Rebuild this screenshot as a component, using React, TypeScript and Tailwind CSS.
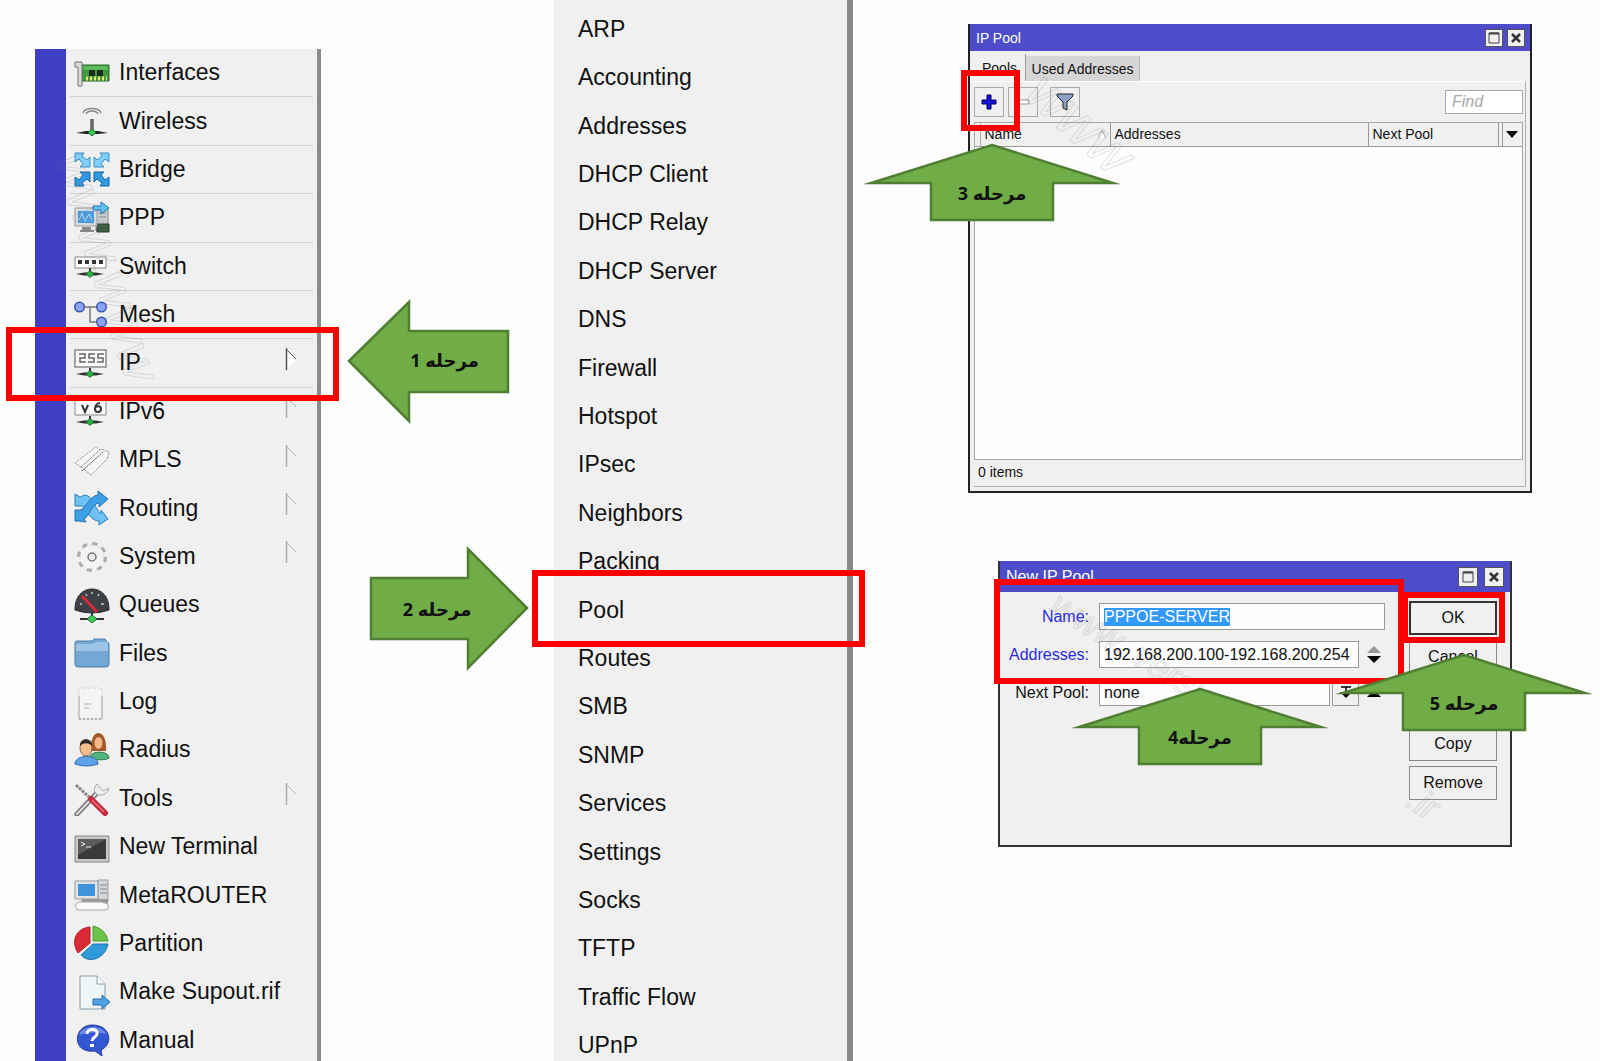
import { useEffect, useRef, type ReactNode } from "react"
import clsx from "clsx"

const NetFoot = ({ y = 29 }: { y?: number }) => (
  <g>
    <path d={`M16 ${y - 6}v5`} stroke="#333" strokeWidth="2" />
    <path d={`M2 ${y}L10 ${y - 1.5}h12L30 ${y}L22 ${y + 1.5}H10Z`} fill="#333" />
    <path d={`M16 ${y - 3.5}l4 3.5l-4 3.5l-4 -3.5Z`} fill="#2fb344" stroke="#145c22" strokeWidth=".8" />
  </g>
)

const icons: Record<string, ReactNode> = {
  Interfaces: (
    <>
      <path d="M8 10h27v16H8Z" fill="#3f9a3f" stroke="#2a6b2c" />
      <path d="M9 11h25v4H9Z" fill="#5cb85a" />
      <path d="M15 15h6v6h-6ZM23 15h6v6h-6Z" fill="#1d2b1d" />
      <path d="M12 23.500h21" stroke="#e9e07a" strokeWidth="4" strokeDasharray="2 2" />
      <path d="M1 7h7v24H4V12H1Z" fill="#d9d9d9" stroke="#777" />
    </>
  ),
  Wireless: (
    <>
      <path d="M9 10c2-6 16-6 18 0M12 11c2-4 10-4 12 0" fill="none" stroke="#888" strokeWidth="1.500" />
      <path d="M18 16v12" stroke="#666" strokeWidth="3.500" />
      <path d="M2 30L12 28h12L34 30L24 31H12Z" fill="#222" />
      <path d="M18 26l4 3.500l-4 3.500l-4-3.500Z" fill="#3ecb57" stroke="#156b26" />
    </>
  ),
  Bridge: (
    <>
      <g fill="#7fd0fb" stroke="#3a8fc4">
        <path d="M1 2h9l-2 3l5 4l3-3v10H6l3-3l-4-5l-4 3Z" />
        <path d="M35 2h-9l2 3l-5 4l-3-3v10h10l-3-3l4-5l4 3Z" />
      </g>
      <g fill="#2f9be6" stroke="#19659f">
        <path d="M1 35h9l-2-3l5-4l3 3V21H6l3 3l-4 5l-4-3Z" />
        <path d="M35 35h-9l2-3l-5-4l-3 3V21h10l-3 3l4 5l4-3Z" />
      </g>
    </>
  ),
  PPP: (
    <>
      <path d="M22 8h12v23H22Z" fill="#c9cdd1" stroke="#888" />
      <path d="M23 24h12v8H23Z" fill="#3d5f42" stroke="#2b3a2d" />
      <path d="M25 13h7M25 17h7" stroke="#888" />
      <path d="M1 8h22v18H1Z" fill="#d8dde0" stroke="#999" />
      <path d="M4 11h16v12H4Z" fill="#4a9be0" />
      <path d="M5 20l3-7l3 8l4-7l3 6" stroke="#b9dcf7" fill="none" />
      <path d="M8 27h9v3h3v2H6v-2h2Z" fill="#888" />
      <path d="M19 6h8V2l8 6l-8 6v-4h-8Z" fill="#5ec0f8" stroke="#2876ad" />
    </>
  ),
  Switch: (
    <>
      <path d="M1 9h31v11H1Z" fill="#fff" stroke="#888" />
      <path d="M4 14h26" stroke="#333" strokeWidth="4" strokeDasharray="4 3" />
      <NetFoot y={26} />
    </>
  ),
  Mesh: (
    <>
      <path d="M9 10h15M16 10v15h7" stroke="#777" fill="none" strokeWidth="1.500" />
      <g fill="#8aa4f4" stroke="#3c55b4" strokeWidth="1.500">
        <circle cx="5.500" cy="10" r="4.800" />
        <circle cx="27.500" cy="10" r="4.800" />
        <circle cx="27.500" cy="25" r="4.800" />
      </g>
    </>
  ),
  IP: (
    <>
      <path d="M1 5h31v17H1Z" fill="#fafafa" stroke="#888" strokeWidth="1.500" />
      <path d="M5 9h6v4H6v4h6M14 17h6v-4h-5V9h6M23 17h6v-4h-5V9h6" fill="none" stroke="#666" strokeWidth="1.500" />
      <NetFoot y={29} />
    </>
  ),
  IPv6: (
    <>
      <path d="M1 5h31v17H1Z" fill="#fafafa" stroke="#888" />
      <path d="M8 12l3 7l3-7M26 10c-4 0-5 4-5 6c0 4 6 4 6 0s-5-3-6-1" fill="none" stroke="#333" strokeWidth="2" />
      <NetFoot y={29} />
    </>
  ),
  MPLS: (
    <g fill="#f6f6f6" stroke="#999">
      <path d="M1 21L22 5l4 3l-19 17Z" strokeDasharray="2 1" />
      <path d="M7 25L27 7l8 3l-2 7l-16 16Z" strokeDasharray="3 1" />
      <path d="M8 29L29 10" stroke="#444" strokeDasharray="2 1" />
    </g>
  ),
  Routing: (
    <>
      <path d="M1 4l5 3l5-2c8 1 10 14 16 19v-4l7 9l-9 6v-4C15 31 14 19 8 16H1Z" fill="#6fc0f3" stroke="#2f80b8" />
      <path d="M1 31V20h5c6-1 9-14 18-15V1l10 8l-9 8v-4c-8 1-9 13-15 16l2 3l-7-1Z" fill="#3da0e6" stroke="#2673ad" />
    </>
  ),
  System: (
    <>
      <circle cx="18" cy="19" r="13" fill="none" stroke="#aaa" strokeWidth="4" strokeDasharray="5 5.200" />
      <circle cx="18" cy="19" r="12" fill="#f4f4f4" stroke="#ccc" strokeDasharray="5 4" />
      <circle cx="18" cy="19" r="4" fill="#f0f0f0" stroke="#777" strokeWidth="1.500" />
    </>
  ),
  Queues: (
    <>
      <path d="M1 23C0-5 36-5 35 23Q27 26 18 26Q9 26 1 23Z" fill="#3d4044" stroke="#26282a" />
      <path d="M6 17l2 0M12 7l1 2M18 5v2M25 7l-1 2M30 17h-3" stroke="#ccc" strokeWidth="1.500" />
      <path d="M8 9L23 25" stroke="#d8283c" strokeWidth="3" />
      <path d="M18 26v5M6 32h24" stroke="#333" strokeWidth="2" />
      <path d="M18 28l5 4l-5 4l-5-4Z" fill="#3ecb57" stroke="#156b26" />
    </>
  ),
  Files: (
    <>
      <path d="M1 8q0-2 2-2h15l2-2h11l2 3q2 0 2 2v20q0 3-3 3H4q-3 0-3-3Z" fill="#74a8d4" stroke="#4d7fa8" />
      <path d="M2 9h17l3-2h12v9H2Z" fill="#9cc5e6" />
    </>
  ),
  Log: (
    <>
      <path d="M5 5l3-2l2 2l3-2l2 2l3-2l2 2l3-2l2 2h3v30H5Z" fill="#f4f4f4" stroke="#ddd" />
      <path d="M5 12v23M28 12v23M10 20h7M10 24h5" stroke="#aaa" />
      <path d="M5 35h23" stroke="#777" strokeDasharray="2 2" />
    </>
  ),
  Radius: (
    <>
      <path d="M17 19c-2-24 17-24 15 0Z" fill="#a5592a" />
      <path d="M15 27c0-9 20-9 20-1q-4 3-20 1Z" fill="#53b37a" stroke="#2f7d50" />
      <ellipse cx="24.500" cy="11" rx="4" ry="6" fill="#f1b98a" />
      <path d="M1 32c0-10 23-10 23 0q-11 4-23 0Z" fill="#5ea2ea" stroke="#2d68ab" />
      <ellipse cx="12" cy="16" rx="6" ry="8" fill="#f3bd8c" stroke="#7c4b28" strokeWidth=".800" />
      <path d="M6 14c-1-9 13-9 12 0c-3-3-8-4-12 0Z" fill="#2f2a2a" />
    </>
  ),
  Tools: (
    <>
      <path d="M2 5l14 13" stroke="#888" strokeWidth="3" strokeDasharray="3 1" />
      <path d="M3 34L22 14" stroke="#777" strokeWidth="5" strokeLinecap="round" />
      <path d="M3 34L22 14" stroke="#ddd" strokeWidth="2" strokeLinecap="round" />
      <path d="M23 4c-5 5-2 12 4 11q6 0 8-7l-6 3l-3-3Z" fill="#eee" stroke="#aaa" />
      <path d="M17 19L31 33" stroke="#c6283c" strokeWidth="6" strokeLinecap="round" />
      <path d="M18 20L30 32" stroke="#ee7581" strokeWidth="1.500" />
    </>
  ),
  "New Terminal": (
    <>
      <path d="M1 7h34v26H1Z" fill="#c9c9c9" stroke="#888" />
      <path d="M4 10h28v20H4Z" fill="#3a3a3c" />
      <path d="M4 10h28L4 26Z" fill="#5c5c5f" />
      <path d="M7 13l4 2l-4 2M12 18h5" stroke="#eee" fill="none" />
    </>
  ),
  MetaROUTER: (
    <>
      <path d="M24 3h10v21H24Z" fill="#d5d8da" stroke="#999" />
      <path d="M26 8h7M26 12h7M26 16h7" stroke="#888" />
      <path d="M1 4h23v18H1Z" fill="#e1e4e6" stroke="#999" />
      <path d="M4 7h17v12H4Z" fill="#3f92dc" />
      <path d="M8 22h26v5l-5-2H7Z" fill="#999" />
      <path d="M1 28l4-3h22l7 2v5l-4 1H3Z" fill="#fbfbfb" stroke="#aaa" />
    </>
  ),
  Partition: (
    <>
      <path d="M16 2v16L4 28C-4 15 3 3 16 2Z" fill="#d92a35" stroke="#ad1a26" />
      <path d="M19 1q13 3 15 15H19Z" fill="#6cc24a" stroke="#4a9a2d" />
      <path d="M19 19h15C31 34 15 39 7 30Z" fill="#2f9ad8" stroke="#1b74aa" />
    </>
  ),
  "Make Supout.rif": (
    <>
      <path d="M6 2h17l8 8v25H6Z" fill="#eef6f8" stroke="#8a9ba3" />
      <path d="M23 2v8h8" fill="#fff" stroke="#8a9ba3" />
      <path d="M19 25h9v-4l8 7l-8 7v-4h-9Z" fill="#4da3e6" stroke="#2670aa" />
    </>
  ),
  Manual: (
    <>
      <path d="M18 3c20 0 21 20 9 25l1 6l-7-5C-3 32-1 3 18 3Z" fill="#3357d0" stroke="#2440a0" />
      <path d="M5 13c3-10 23-11 27-1q-13-4-27 1Z" fill="#6f8cea" />
      <path d="M13 12c0-6 11-6 10 0c0 3-5 3-5 7" fill="none" stroke="#fff" strokeWidth="3" />
      <path d="M16 22h4v3h-4Z" fill="#fff" />
    </>
  ),
}

const mainMenu = [
  { label: "Interfaces", divider: true },
  { label: "Wireless", divider: true },
  { label: "Bridge", divider: true },
  { label: "PPP", divider: true },
  { label: "Switch", divider: true },
  { label: "Mesh", divider: true },
  { label: "IP", divider: true, sub: true },
  { label: "IPv6", sub: true },
  { label: "MPLS", sub: true },
  { label: "Routing", sub: true },
  { label: "System", sub: true },
  { label: "Queues" },
  { label: "Files" },
  { label: "Log" },
  { label: "Radius" },
  { label: "Tools", sub: true },
  { label: "New Terminal" },
  { label: "MetaROUTER" },
  { label: "Partition" },
  { label: "Make Supout.rif" },
  { label: "Manual" },
]

const ipMenu = [
  "ARP", "Accounting", "Addresses", "DHCP Client", "DHCP Relay", "DHCP Server", "DNS", "Firewall",
  "Hotspot", "IPsec", "Neighbors", "Packing", "Pool", "Routes", "SMB", "SNMP", "Services",
  "Settings", "Socks", "TFTP", "Traffic Flow", "UPnP",
]

function SubFlag({ filled }: { filled: boolean }) {
  return (
    <svg width="12" height="22" viewBox="0 0 12 22" className="mb-2" aria-hidden="true">
      {filled && <path d="M1 1L11 12L1 21Z" fill="#fff" />}
      <path d="M1.500 0v22" stroke={filled ? "#555" : "#aaa"} strokeWidth="1.500" />
      <path d="M1 1L11 11" stroke={filled ? "#555" : "#999"} strokeDasharray={filled ? undefined : "2 1"} />
    </svg>
  )
}

function MainMenu() {
  return (
    <nav className="-mb-1 mt-[49px] flex w-[286px] shrink-0 border-r-[4px] border-[#8a8a8a] bg-[#f0f0f0]">
      <div className="w-[31px] shrink-0 bg-[#3f3fc4]" />
      <ul className="flex flex-1 flex-col px-1">
        {mainMenu.map((item) => (
          <li
            key={item.label}
            className={clsx("flex min-h-12 flex-1 border-b", item.divider ? "border-[#d4d4d4]" : "border-transparent")}
          >
            <button className="flex w-full items-center gap-[9px] whitespace-nowrap pl-1 pr-4 text-left">
              <svg width="36" height="36" viewBox="0 0 36 36" className="shrink-0" aria-hidden="true">
                {icons[item.label]}
              </svg>
              <span className="flex-1">{item.label}</span>
              {item.sub && <SubFlag filled={item.label === "IP"} />}
            </button>
          </li>
        ))}
      </ul>
    </nav>
  )
}

function IpMenu() {
  return (
    <nav className="-mb-[9px] ml-[233px] flex w-[299px] shrink-0 border-r-[6px] border-[#8a8a8a] bg-[#f0f0f0] pt-[5px]">
      <ul className="flex flex-1 flex-col">
        {ipMenu.map((label) => (
          <li key={label} className="flex min-h-12 flex-1">
            <button className="w-full pl-6 text-left">{label}</button>
          </li>
        ))}
      </ul>
    </nav>
  )
}

function TitleBar({ title, tall }: { title: string; tall?: boolean }) {
  const box = clsx(
    "flex items-center justify-center border border-[#555] bg-[#f0f0f0]",
    tall ? "size-5" : "size-[18px]",
  )
  return (
    <header
      className={clsx(
        "flex items-center bg-[#4d4dc9] pl-1.5 text-white",
        tall ? "h-[31px] gap-1.5 pr-1.5" : "h-[27px] gap-1 pr-[5px]",
      )}
    >
      <h2 className="flex-1">{title}</h2>
      <button className={box} aria-label="Maximize">
        <svg width="12" height="12" viewBox="0 0 12 12">
          <path d="M1 1h10v10H1Z" fill="none" stroke="#444" />
          <path d="M1 1.500h10" stroke="#444" strokeWidth="2" />
        </svg>
      </button>
      <button className={box} aria-label="Close">
        <svg width="12" height="12" viewBox="0 0 12 12">
          <path d="M2 2l8 8M10 2l-8 8" stroke="#333" strokeWidth="2.500" />
        </svg>
      </button>
    </header>
  )
}

function PoolWindow() {
  const tool = "flex size-[30px] items-center justify-center border border-[#aaa]"
  return (
    <section className="flex h-[469px] w-[564px] flex-col border-2 border-t-0 border-[#222] bg-[#f0f0f0] text-[14px]">
      <TitleBar title="IP Pool" />
      <div className="flex h-[30px] items-end pl-1">
        <button className="h-[27px] w-[52px] border-r border-[#999]">Pools</button>
        <button className="h-[25px] w-[114px] border-r border-[#bbb] bg-[#d6d6d6]">Used Addresses</button>
      </div>
      <div className="mx-1 mb-1 flex flex-1 flex-col border-b border-r border-t border-[#b0b0b0] border-t-white">
        <div className="flex h-10 items-center pr-0.5">
          <button className={tool} aria-label="Add">
            <svg width="18" height="18" viewBox="0 0 18 18">
              <path d="M7 2h4v5h5v4h-5v5H7v-5H2V7h5Z" fill="#1212d8" stroke="#000060" />
            </svg>
          </button>
          <button className={clsx(tool, "ml-1")} aria-label="Remove">
            <svg width="18" height="18" viewBox="0 0 18 18">
              <path d="M3 7h12v4H3Z" fill="#fff" stroke="#999" />
            </svg>
          </button>
          <button className={clsx(tool, "ml-3")} aria-label="Filter">
            <svg width="18" height="18" viewBox="0 0 18 18">
              <path d="M1 1h16v2l-6 6v8l-4-2V9L1 3Z" fill="#8fa3c8" stroke="#222" />
            </svg>
          </button>
          <input
            aria-label="Find"
            placeholder="Find"
            className="ml-auto h-6 w-[78px] border border-[#aaa] bg-white px-1.5 text-[16px] italic outline-none placeholder:text-[#aaa]"
          />
        </div>
        <div className="mr-0.5 flex-1 border border-[#a8a8a8] bg-[#fdfdfd]">
          <table className="w-full table-fixed border-collapse bg-[#f0f0f0]">
            <thead>
              <tr className="h-[23px] border-b border-[#999] text-left">
                <th className="w-[5px] border-r border-[#aaa]" />
                <th className="w-[130px] border-r border-[#999] pl-1 font-normal">
                  <span className="flex items-center justify-between pr-1">
                    Name
                    <svg width="9" height="14" viewBox="0 0 9 14" aria-hidden="true">
                      <path d="M1 11L5 3L9 11" fill="#fff" stroke="#aaa" />
                    </svg>
                  </span>
                </th>
                <th className="border-r border-[#999] pl-1 font-normal">Addresses</th>
                <th className="w-[130px] border-r border-[#999] pl-1 font-normal">Next Pool</th>
                <th className="w-1 border-r border-[#999]" />
                <th className="w-5">
                  <button className="flex w-full justify-center" aria-label="Columns">
                    <svg width="12" height="7" viewBox="0 0 12 7">
                      <path d="M0 0h12L6 7Z" fill="#000" />
                    </svg>
                  </button>
                </th>
              </tr>
            </thead>
            <tbody />
          </table>
        </div>
        <p className="h-[26px] pl-1 leading-6">0 items</p>
      </div>
    </section>
  )
}

function Spinner({ muted }: { muted?: boolean }) {
  return (
    <svg width="14" height="20" viewBox="0 0 14 20" className="ml-2" aria-hidden="true">
      {muted ? (
        <>
          <path d="M0 8h14L7 1Z" fill="#999" />
          <path d="M0 11h14L7 18Z" fill="#000" />
        </>
      ) : (
        <path d="M0 14h14L7 7Z" fill="#000" />
      )}
    </svg>
  )
}

function NewPoolWindow() {
  const nameRef = useRef<HTMLInputElement>(null)

  useEffect(() => {
    nameRef.current?.focus()
    nameRef.current?.select()
  }, [])

  const field = "h-[27px] rounded-none border border-[#999] bg-[#fdfdfd] px-1 outline-none"
  const label = "mr-[10px] w-[89px] shrink-0 text-right"
  const action = "h-[34px] border border-[#888]"
  return (
    <section className="ml-[30px] mt-[68px] h-[286px] w-[514px] border-2 border-t-0 border-[#333] bg-[#f0f0f0] text-[16px]">
      <TitleBar title="New IP Pool" tall />
      <div className="flex justify-between pr-[13px] pt-[9px]">
        <form className="flex w-[386px] flex-col gap-[11px] pt-0.5">
          <div className="flex items-center">
            <label htmlFor="pool-name" className={clsx(label, "text-[#2a2ae0]")}>Name:</label>
            <input
              id="pool-name"
              ref={nameRef}
              defaultValue="PPPOE-SERVER"
              className={clsx(field, "w-[286px] selection:bg-[#3399ff] selection:text-white")}
            />
          </div>
          <div className="flex items-center">
            <label htmlFor="pool-addresses" className={clsx(label, "text-[#2a2ae0]")}>Addresses:</label>
            <input id="pool-addresses" defaultValue="192.168.200.100-192.168.200.254" className={clsx(field, "w-[260px]")} />
            <Spinner muted />
          </div>
          <div className="flex items-center">
            <label htmlFor="pool-next" className={label}>Next Pool:</label>
            <select id="pool-next" className={clsx(field, "w-[231px] appearance-none")}>
              <option>none</option>
            </select>
            <button type="button" aria-label="Open list" className="ml-0.5 flex h-[27px] w-[27px] items-center justify-center border border-[#999]">
              <svg width="12" height="13" viewBox="0 0 12 13">
                <path d="M1 1h10M6 1v5" stroke="#000" strokeWidth="1.500" />
                <path d="M0 6h12L6 12Z" fill="#000" />
              </svg>
            </button>
            <Spinner />
          </div>
        </form>
        <div className="flex w-[88px] flex-col gap-[5px]">
          <button className="h-[34px] border-2 border-[#333]">OK</button>
          <button className={action}>Cancel</button>
          <button className={clsx(action, "mt-12")}>Copy</button>
          <button className={action}>Remove</button>
        </div>
      </div>
    </section>
  )
}

const arrows = {
  left: { box: "h-[123px] w-[163px]", path: "M2 61L62 2V31H161V92H62V121Z", label: "pb-1 pl-10 pr-2" },
  right: { box: "h-[123px] w-[160px]", path: "M158 61L99 2V31H2V92H99V121Z", label: "pr-6" },
  up: { box: "h-[79px] w-[256px]", path: "M128 2L249 40H189V77H67V40H7Z", label: "pt-5" },
}

function StepArrow({ dir, text, place }: { dir: keyof typeof arrows; text: string; place: string }) {
  const arrow = arrows[dir]
  return (
    <div className={clsx("absolute", place, arrow.box)}>
      <svg className="absolute inset-0 size-full overflow-visible" aria-hidden="true">
        <path d={arrow.path} fill="#70ad47" stroke="#507e32" strokeWidth="2.500" strokeMiterlimit="10" />
      </svg>
      <p
        dir="rtl"
        className={clsx(
          "relative flex h-full items-center justify-center whitespace-pre font-['Open_Sans','DejaVu_Sans',sans-serif] text-[18px] font-bold",
          arrow.label,
        )}
      >
        {text}
      </p>
    </div>
  )
}

function Watermark({ place, children }: { place: string; children: string }) {
  return (
    <span
      aria-hidden="true"
      className={clsx(
        "pointer-events-none absolute origin-top-left select-none whitespace-nowrap italic leading-none text-transparent opacity-20 [-webkit-text-stroke:1px_#777]",
        place,
      )}
    >
      {children}
    </span>
  )
}

export default function App() {
  const frame = "pointer-events-none absolute border-[6px] border-[#fb0000]"
  return (
    <main className="relative flex min-h-screen overflow-hidden bg-[#fdfdfd] pl-[35px] font-['Liberation_Sans',Arial,sans-serif] text-[23px] leading-none text-[#111]">
      <MainMenu />
      <IpMenu />
      <div className="ml-[115px] mt-6 flex-1">
        <PoolWindow />
        <NewPoolWindow />
      </div>

      <Watermark place="left-[96px] top-[146px] rotate-[72deg] text-[52px]">www.www</Watermark>
      <Watermark place="left-[1054px] top-[62px] rotate-[42deg] text-[56px]">www</Watermark>
      <Watermark place="left-[1064px] top-[586px] rotate-[32deg] text-[36px]">www. version</Watermark>
      <Watermark place="left-[1420px] top-[780px] rotate-[32deg] text-[36px]">.ir</Watermark>

      {/* highlighted targets */}
      <div className={clsx(frame, "left-1.5 top-[327px] h-[74px] w-[333px]")} />
      <div className={clsx(frame, "left-[532px] top-[570px] h-[77px] w-[333px]")} />
      <div className={clsx(frame, "left-[961px] top-[70px] h-[61px] w-[59px]")} />
      <div className={clsx(frame, "left-[994px] top-[579px] h-[105px] w-[410px]")} />
      <div className={clsx(frame, "left-[1402px] top-[592px] h-[51px] w-[103px]")} />

      <StepArrow dir="left" text="مرحله 1" place="left-[347px] top-[300px]" />
      <StepArrow dir="right" text="مرحله 2" place="left-[369px] top-[547px]" />
      <StepArrow dir="up" text="مرحله 3" place="left-[864px] top-[143px]" />
      <StepArrow dir="up" text="مرحله4" place="left-[1072px] top-[687px]" />
      <StepArrow dir="up" text="مرحله 5" place="left-[1336px] top-[653px]" />
    </main>
  )
}
